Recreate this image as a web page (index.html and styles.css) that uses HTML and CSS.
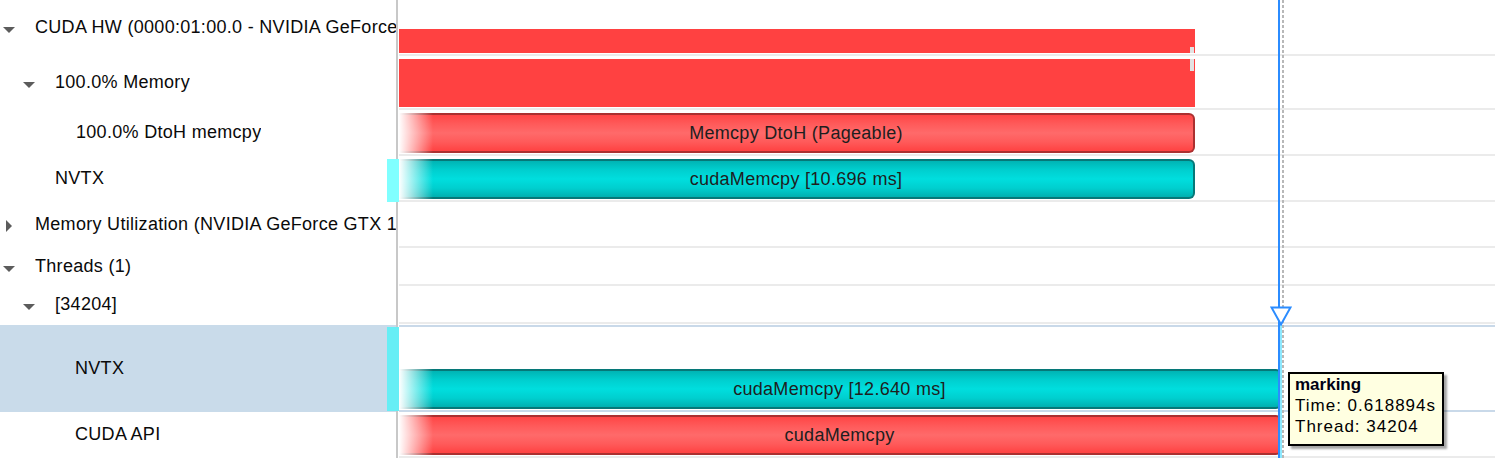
FILE: index.html
```html
<!DOCTYPE html>
<html>
<head>
<meta charset="utf-8">
<link rel="stylesheet" href="styles.css">
</head>
<body>
<div class="app">
  <div class="labels">
    <div class="lrow h56">
      <span class="tw down"><svg width="12" height="6" viewBox="0 0 12 6"><path d="M0 0H12L6 6Z"/></svg></span>
      <span class="txt">CUDA HW (0000:01:00.0 - NVIDIA GeForce GTX 1</span>
    </div>
    <div class="lrow h54">
      <span class="tw down lv1"><svg width="12" height="6" viewBox="0 0 12 6"><path d="M0 0H12L6 6Z"/></svg></span>
      <span class="txt">100.0% Memory</span>
    </div>
    <div class="lrow h46 ind76">
      <span class="txt">100.0% DtoH memcpy</span>
    </div>
    <div class="lrow h46 ind55">
      <span class="txt">NVTX</span>
      <span class="mark mark-a"></span>
    </div>
    <div class="lrow h46">
      <span class="tw right"><svg width="6" height="12" viewBox="0 0 6 12"><path d="M0 0L6 6L0 12Z"/></svg></span>
      <span class="txt">Memory Utilization (NVIDIA GeForce GTX 1</span>
    </div>
    <div class="lrow h38">
      <span class="tw down"><svg width="12" height="6" viewBox="0 0 12 6"><path d="M0 0H12L6 6Z"/></svg></span>
      <span class="txt">Threads (1)</span>
    </div>
    <div class="lrow h39">
      <span class="tw down lv1"><svg width="12" height="6" viewBox="0 0 12 6"><path d="M0 0H12L6 6Z"/></svg></span>
      <span class="txt">[34204]</span>
    </div>
    <div class="lrow h87 sel ind75">
      <span class="txt">NVTX</span>
      <span class="mark mark-b"></span>
    </div>
    <div class="lrow h46 ind75">
      <span class="txt">CUDA API</span>
    </div>
  </div>
  <div class="divider"></div>
  <div class="tracks">
    <div class="trow h56"><div class="flat flat-a" style="width:796px"></div></div>
    <div class="trow h54"><div class="flat flat-b" style="width:796px"></div></div>
    <div class="trow h46"><div class="bar red" style="width:796px"><span>Memcpy DtoH (Pageable)</span></div></div>
    <div class="trow h46"><div class="bar cyan" style="width:796px"><span>cudaMemcpy [10.696 ms]</span></div></div>
    <div class="trow h46"></div>
    <div class="trow h38"></div>
    <div class="trow h38 gapb"></div>
    <div class="trow h87 tsel"><div class="bar cyan low" style="width:883px"><span>cudaMemcpy [12.640 ms]</span></div></div>
    <div class="trow h46"><div class="bar red" style="width:883px"><span>cudaMemcpy</span></div></div>

    <div class="vline"></div>
    <div class="vdash"></div>
    <div class="vcyan"></div>
    <svg class="tri" width="22" height="20" viewBox="0 0 22 20"><path d="M1.5 1.5H20.5L11 18.5Z"/></svg>
    <div class="tip">
      <div class="tip-title">marking</div>
      <div class="tip-line">Time: 0.618894s</div>
      <div class="tip-line">Thread: 34204</div>
    </div>
  </div>
</div>
</body>
</html>
```
FILE: styles.css
```css
* { box-sizing: border-box; }
html, body {
  margin: 0;
  padding: 0;
  background: #fff;
}
body {
  width: 1495px;
  height: 458px;
  overflow: hidden;
  font-family: "Liberation Sans", Arial, sans-serif;
  font-size: 18px;
  color: #000;
}
.app {
  display: flex;
  height: 458px;
}
.labels {
  width: 396px;
  display: flex;
  flex-direction: column;
}
.divider {
  width: 2px;
  background: #c8c8c8;
}
.tracks {
  position: relative;
  flex: 1;
  margin-left: 1px;
  display: flex;
  flex-direction: column;
}

.h56 { height: 56px; }
.h54 { height: 54px; }
.h46 { height: 46px; }
.h38 { height: 38px; }
.h39 { height: 39px; }
.h87 { height: 87px; }

.lrow {
  display: flex;
  align-items: center;
  padding-bottom: 2px;
  flex: none;
}
.lrow.sel {
  background: #c9dbea;
  padding-top: 2px;
  padding-bottom: 2px;
}
.ind55 { padding-left: 55px; }
.ind75 { padding-left: 75px; }
.ind76 { padding-left: 76px; }
.txt {
  white-space: nowrap;
  overflow: hidden;
  min-width: 0;
  flex: 0 1 auto;
  letter-spacing: 0.3px;
  color: #0a0a0a;
}
.tw {
  display: flex;
  flex: none;
  fill: #5c5c5c;
}
.tw.down {
  margin-left: 3px;
  margin-right: 20px;
  margin-top: 5px;
}
.tw.down.lv1 { margin-left: 23px; }
.tw.right {
  margin-left: 6px;
  margin-right: 23px;
  margin-top: 3px;
}
.mark {
  position: relative;
  z-index: 2;
  flex: none;
  width: 12px;
  margin-left: auto;
  margin-right: -3px;
  align-self: flex-start;
}
.mark-a {
  height: 43px;
  margin-top: 3px;
  background: #80ffff;
}
.mark-b {
  height: 84px;
  background: #66eef5;
}

.trow {
  flex: none;
  border-bottom: 2px solid #ebebeb;
  padding-top: 3px;
}
.trow.h56 { padding-top: 29px; }
.trow.gapb { margin-bottom: 1px; }
.trow.tsel {
  border-top: 2px solid #c9d9e9;
  border-bottom: 2px solid #c9d9e9;
  padding-top: 42px;
}
.flat {
  background: linear-gradient(#e2e2e2, #e2e2e2) no-repeat, #ff4141;
}
.flat-a {
  height: 24px;
  background-size: 4px 6px, auto;
  background-position: right 1px bottom 0, 0 0;
}
.flat-b {
  height: 48px;
  background-size: 4px 12px, auto;
  background-position: right 1px top 0, 0 0;
}
.bar {
  position: relative;
  height: 40px;
  border: 2px solid;
  border-left: none;
  border-radius: 0 6px 6px 0;
  display: flex;
  align-items: center;
  justify-content: center;
  letter-spacing: 0.3px;
  color: #1e1e1e;
  white-space: nowrap;
}
.bar::before {
  content: "";
  position: absolute;
  left: 0;
  top: -2px;
  bottom: -2px;
  width: 34px;
  background: linear-gradient(to right, rgba(255,255,255,1), rgba(255,255,255,0.6) 40%, rgba(255,255,255,0));
}
.bar span { position: relative; }
.bar.red {
  border-color: #ab3030;
  background: linear-gradient(#ff4646, #ff5a5a 25%, #ff6a6a 50%, #ff5a5a 75%, #ff4242);
}
.bar.cyan {
  border-color: #067878;
  background: linear-gradient(#00b4b4, #00cfcf 25%, #00dede 50%, #00cfcf 75%, #00b0b0);
}

.vline {
  position: absolute;
  left: 879px;
  top: 0;
  width: 2px;
  height: 458px;
  background: #2b8cff;
}
.vdash {
  position: absolute;
  left: 883px;
  top: 0;
  width: 2px;
  height: 458px;
  background: repeating-linear-gradient(#b8b8b8 0 3px, transparent 3px 5px);
}
.vcyan {
  position: absolute;
  left: 881px;
  top: 325px;
  width: 2px;
  height: 133px;
  background: #8ee9ff;
}
.tri {
  position: absolute;
  left: 871px;
  top: 306px;
  fill: #fff;
  stroke: #2b8cff;
  stroke-width: 2;
}
.tip {
  position: absolute;
  left: 889px;
  top: 372px;
  width: 156px;
  height: 74px;
  background: #ffffe1;
  border: 2px solid #000;
  box-shadow: 3px 3px 2px rgba(0,0,0,0.35);
  padding: 0 5px;
  font-size: 17px;
  line-height: 21px;
  white-space: nowrap;
}
.tip-title {
  font-weight: bold;
  color: #000014;
}
.tip-line {
  letter-spacing: 1px;
}
```
